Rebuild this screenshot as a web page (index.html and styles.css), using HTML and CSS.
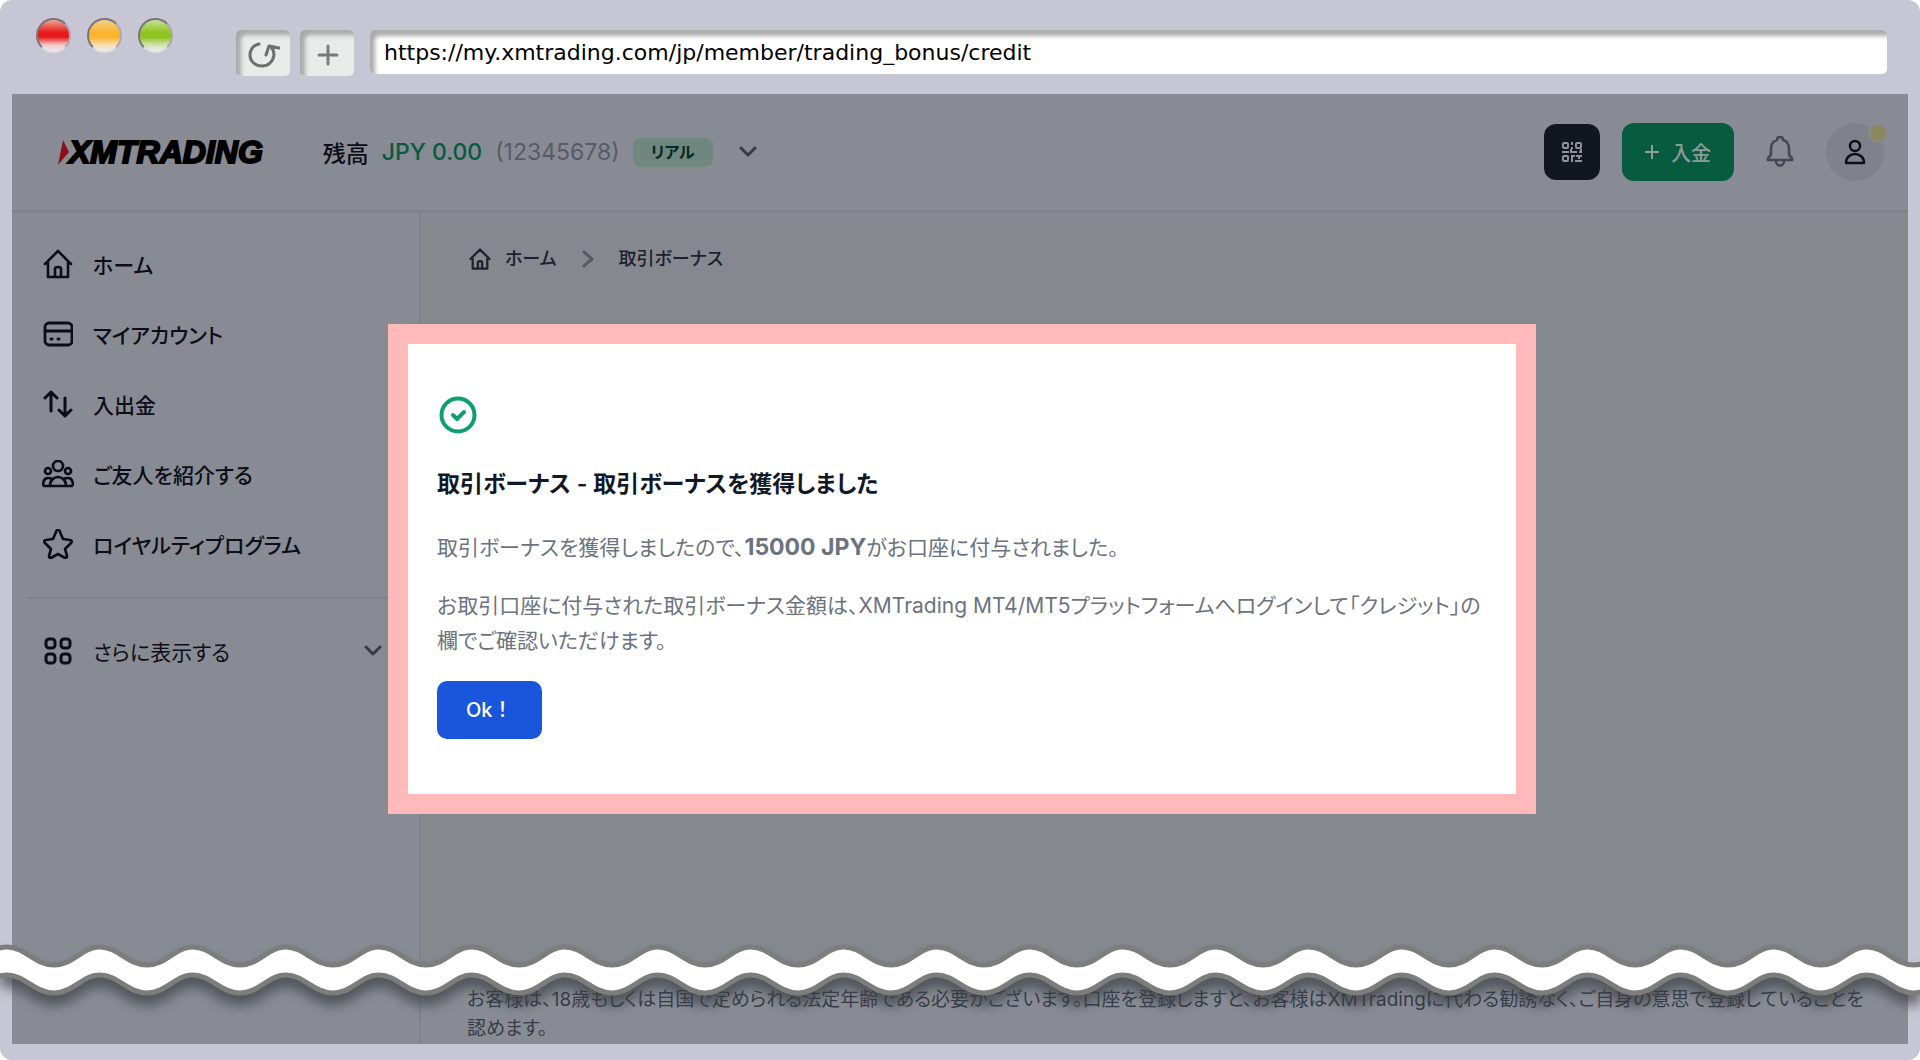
FILE: index.html
```html
<!DOCTYPE html>
<html lang="ja">
<head>
  <meta charset="UTF-8">
  <title>取引ボーナス</title>
  <link rel="stylesheet" href="styles.css">
</head>
<body>

<div class="browser">
  <div class="toolbar">
    <div class="lights">
      <span class="light red"></span>
      <span class="light yellow"></span>
      <span class="light green"></span>
    </div>
    <div class="tools">
      <button class="tool" aria-label="再読み込み">
        <svg width="32" height="28" viewBox="0 0 32 28" fill="none" stroke="#6f6f6f" stroke-width="3" stroke-linecap="round" stroke-linejoin="round"><path d="M11 3C5 4 2 9 2 14c0 6 5 11 12 11 6 0 11-4 12-11 0-3 0-5-3-8M18 14l3-9 10 2"/></svg>
      </button>
      <button class="tool" aria-label="新しいタブ">
        <svg width="22" height="22" viewBox="0 0 22 22" fill="none" stroke="#7a7a7a" stroke-width="3" stroke-linecap="round"><path d="M11 2v18M2 11h18"/></svg>
      </button>
    </div>
    <input class="url" type="text" aria-label="URL" value="https://my.xmtrading.com/jp/member/trading_bonus/credit">
  </div>

  <div class="page">
    <header class="header">
      <a href="#" class="logo">
        <svg width="11" height="25" viewBox="0 0 11 25"><path d="M5 0l6 12L0 25z" fill="#8c1019"/></svg>
        <span>XMTRADING</span>
      </a>
      <div class="balance">
        <span class="label">残高</span>
        <span class="amount">JPY 0.00</span>
        <span class="account">(12345678)</span>
        <span class="badge">リアル</span>
        <button class="plain" aria-label="口座を選択">
          <svg width="20" height="12" viewBox="0 0 20 12" fill="none" stroke="#373b47" stroke-width="3" stroke-linecap="round" stroke-linejoin="round"><path d="M3 2l7 7 7-7"/></svg>
        </button>
      </div>
      <div class="actions">
        <button class="qr" aria-label="QRコード">
          <svg width="22" height="22" viewBox="0 0 22 22" fill="none" stroke="#8f929a" stroke-width="2"><rect x="2" y="2" width="5" height="5" rx="1"/><rect x="15" y="2" width="5" height="5" rx="1"/><rect x="2" y="15" width="5" height="5" rx="1"/><path d="M11 1v3M11 6v2M1 11h7M10 8v3h6M18 11h3M20 8v2M11 21v-6h3M15 15h6M18 15v3M14 20h7"/></svg>
        </button>
        <button class="deposit">
          <svg width="14" height="14" viewBox="0 0 14 14" stroke="#8f9b98" stroke-width="2"><path d="M7 0v14M0 7h14"/></svg>
          入金
        </button>
        <button class="plain bell" aria-label="お知らせ">
          <svg width="28" height="32" viewBox="0 0 28 32" fill="none" stroke="#444854" stroke-width="2.6" stroke-linejoin="round"><path d="M2 24h24v-2c-2-1-3-2-3-5v-4c0-5-2-8-6-9 0-2-1-3-3-3s-3 1-3 3c-4 1-6 4-6 9v4c0 3-1 4-3 5zM10 25c0 6 8 6 8 0"/></svg>
        </button>
        <button class="user" aria-label="プロフィール">
          <svg width="22" height="26" viewBox="0 0 22 26" fill="none" stroke="#0b0e17" stroke-width="2.4" stroke-linejoin="round"><circle cx="11" cy="7" r="5"/><path d="M2 24c0-12 18-12 18 0z"/></svg>
          <span class="dot"></span>
        </button>
      </div>
    </header>

    <div class="layout">
      <nav class="sidebar">
        <a href="#" class="item">
          <svg width="30" height="30" viewBox="0 0 30 30" fill="none" stroke="currentColor" stroke-width="2.6" stroke-linecap="round" stroke-linejoin="round"><path d="M2 15L15 2l13 13M5 12v16h20V12M12 28v-8c0-1 1-2 3-2s3 1 3 2v8"/></svg>
          ホーム
        </a>
        <a href="#" class="item">
          <svg width="30" height="30" viewBox="0 0 30 30" fill="none" stroke="currentColor" stroke-width="2.8" stroke-linecap="round"><rect x="2" y="4" width="27" height="22" rx="4"/><path d="M2 12h27"/><path d="M8 20h1M15 20h1" stroke-width="3"/></svg>
          マイアカウント
        </a>
        <a href="#" class="item">
          <svg width="30" height="30" viewBox="0 0 30 30" fill="none" stroke="currentColor" stroke-width="3" stroke-linecap="round" stroke-linejoin="round"><path d="M2 9l6-6 6 6M8 3v19M22 9v18M16 21l6 6 6-6"/></svg>
          入出金
        </a>
        <a href="#" class="item">
          <svg class="wide" width="32" height="28" viewBox="0 0 32 28" fill="none" stroke="currentColor" stroke-width="2.7" stroke-linejoin="round"><circle cx="16" cy="6" r="5"/><circle cx="6" cy="11" r="3"/><circle cx="26" cy="11" r="3"/><path d="M8 26c0-12 16-12 16 0M1 26c0-6 2-8 5-8 2 0 3 0 4 1M31 26c0-6-2-8-5-8-2 0-3 0-4 1M1 26h30"/></svg>
          ご友人を紹介する
        </a>
        <a href="#" class="item">
          <svg width="30" height="30" viewBox="0 0 30 30" fill="none" stroke="currentColor" stroke-width="2.7" stroke-linejoin="round"><path d="M15 1c1 0 2 1 2 2l3 7 7 1c2 0 2 2 1 3l-6 6 2 7c0 2-1 2-2 2l-7-4-7 4c-1 0-2 0-2-2l2-7-6-6c-1-1-1-3 1-3l7-1 3-7c0-1 1-2 2-2z"/></svg>
          ロイヤルティプログラム
        </a>
        <button class="item more">
          <svg width="30" height="30" viewBox="0 0 30 30" fill="none" stroke="currentColor" stroke-width="3"><rect x="3" y="3" width="9" height="9" rx="3"/><rect x="18" y="3" width="9" height="9" rx="3"/><rect x="3" y="18" width="9" height="9" rx="3"/><rect x="18" y="18" width="9" height="9" rx="3"/></svg>
          さらに表示する
          <svg class="arrow" width="20" height="12" viewBox="0 0 20 12" fill="none" stroke="#373b47" stroke-width="3" stroke-linecap="round" stroke-linejoin="round"><path d="M3 2l7 7 7-7"/></svg>
        </button>
      </nav>

      <main class="main">
        <div class="breadcrumb">
          <a href="#">
            <svg width="22" height="22" viewBox="0 0 30 30" fill="none" stroke="currentColor" stroke-width="3" stroke-linecap="round" stroke-linejoin="round"><path d="M2 15L15 2l13 13M5 12v16h20V12M12 28v-8c0-1 1-2 3-2s3 1 3 2v8"/></svg>
            ホーム
          </a>
          <svg width="12" height="20" viewBox="0 0 12 20" fill="none" stroke="#565b67" stroke-width="3" stroke-linecap="round" stroke-linejoin="round"><path d="M2 3l8 7-8 7"/></svg>
          <span>取引ボーナス</span>
        </div>
        <p class="notice">お客様は、18歳もしくは自国で定められる法定年齢である必要がございます。口座を登録しますと、お客様はXMTradingに代わる勧誘なく、ご自身の意思で登録していることを認めます。</p>
      </main>
    </div>

    <div class="overlay">
      <div class="modal" role="dialog" aria-labelledby="modalTitle">
        <svg class="check" width="42" height="42" viewBox="0 0 42 42" fill="none" stroke="#0e9f6e" stroke-linecap="round" stroke-linejoin="round"><circle cx="21" cy="21" r="16.5" stroke-width="4"/><path d="M16 21l4 4 7-7" stroke-width="4"/></svg>
        <h1 id="modalTitle">取引ボーナス - 取引ボーナスを獲得しました</h1>
        <p>取引ボーナスを獲得しましたので、<strong>15000 JPY</strong>がお口座に付与されました。</p>
        <p>お取引口座に付与された取引ボーナス金額は、XMTrading MT4/MT5プラットフォームへログインして「クレジット」の欄でご確認いただけます。</p>
        <button class="ok">Ok！</button>
      </div>
    </div>
  </div>

  <!-- torn page line -->
  <svg class="wave" width="100%" height="76" aria-hidden="true">
    <defs>
      <pattern id="wavePattern" width="93" height="76" patternUnits="userSpaceOnUse">
        <path d="M-86 6C-68 6-58 24-39 24S-11 6 7 6 35 24 54 24 82 6 100 6 128 24 147 24V52C128 52 118 34 100 34S73 52 54 52 25 34 7 34-20 52-39 52-68 34-86 34Z" fill="#fff" stroke="#7d7d7d" stroke-width="5"/>
      </pattern>
    </defs>
    <rect width="100%" height="76" fill="url(#wavePattern)"/>
  </svg>
</div>

</body>
</html>
```
FILE: styles.css
```css
* {
  box-sizing: border-box;
}
body {
  margin: 0;
  background: #fff;
  font-family: Inter, "Noto Sans CJK JP", sans-serif;
  font-feature-settings: "palt";
  color: #0b0e17;
}
svg {
  flex-shrink: 0;
}
button, input {
  font: inherit;
  font-feature-settings: inherit;
  color: inherit;
}
button {
  border: none;
  padding: 0;
  cursor: pointer;
}
a {
  color: inherit;
  text-decoration: none;
}
.browser {
  position: relative;
  display: flex;
  flex-direction: column;
  min-height: 100vh;
  padding: 0 12px 16px;
  background: #c7c6d4;
  border-radius: 12px;
  overflow: hidden;
}

/* browser bar */
.toolbar {
  display: flex;
  align-items: flex-start;
  height: 94px;
  padding: 18px 21px 0 24px;
}
.lights {
  display: flex;
  gap: 16px;
  margin-right: 63px;
}
.light {
  width: 35px;
  height: 35px;
  border-radius: 50%;
  border: 2px solid #77767c;
  border-bottom-color: #dddce4;
  border-right-color: #a9a8b2;
}
.red {
  background: linear-gradient(#f2a593, #e71a1a 40%, #e71a1a 55%, #f3c5c8 80%, #eee);
}
.yellow {
  background: linear-gradient(#f3cd85, #fab52c 40%, #fab52c 55%, #f5dcaf 80%, #eee);
}
.green {
  background: linear-gradient(#c5e393, #8fc320 40%, #8fc320 55%, #cfe2ac 80%, #eee);
}
.tools {
  display: flex;
  gap: 10px;
  margin: 12px 16px 0 0;
}
.tool {
  display: flex;
  align-items: center;
  justify-content: center;
  width: 54px;
  height: 46px;
  padding: 4px 0 0 2px;
  border-radius: 5px;
  background: #e9eaea;
  box-shadow: inset 5px 5px 4px #a9a9a9;
}
.url {
  flex: 1;
  min-width: 0;
  height: 44px;
  margin-top: 12px;
  padding: 0 14px 0;
  border: none;
  border-radius: 5px;
  background: #fff;
  box-shadow: inset 5px 6px 4px #acacac;
  font-family: "DejaVu Sans", sans-serif;
  font-size: 22px;
  color: #000;
}

/* page */
.page {
  position: relative;
  flex: 1;
  display: flex;
  flex-direction: column;
  background: #888b94;
}
.header {
  display: flex;
  align-items: center;
  height: 118px;
  padding: 0 24px 0 46px;
  border-bottom: 2px solid #7f828b;
}
.logo {
  display: flex;
  align-items: center;
  font-family: "Liberation Sans", sans-serif;
  font-size: 32px;
  font-weight: bold;
  font-style: italic;
  line-height: 1;
  color: #000;
  -webkit-text-stroke: 2px #000;
}
.balance {
  display: flex;
  align-items: center;
  gap: 13px;
  margin-left: 60px;
  font-size: 23px;
}
.label {
  font-weight: 500;
}
.amount {
  font-weight: 500;
  color: #075b3f;
}
.account {
  color: #565b67;
}
.badge {
  padding: 0 18px;
  border-radius: 8px;
  background: #70877f;
  font-size: 16px;
  font-weight: 700;
  line-height: 29px;
  color: #04291f;
}
.plain {
  display: flex;
  padding: 12px;
  background: none;
}
.actions {
  display: flex;
  align-items: center;
  gap: 22px;
  margin-left: auto;
}
.qr, .user, .deposit {
  display: flex;
  align-items: center;
  justify-content: center;
}
.qr {
  width: 56px;
  height: 56px;
  border-radius: 12px;
  background: #111620;
}
.deposit {
  gap: 12px;
  height: 58px;
  padding: 0 23px;
  border-radius: 12px;
  background: #075b3f;
  font-size: 20px;
  font-weight: 500;
  color: #8f9b98;
}
.bell {
  padding: 0 10px;
}
.user {
  position: relative;
  width: 58px;
  height: 58px;
  border-radius: 50%;
  background: #7f828b;
}
.dot {
  position: absolute;
  top: 0;
  right: -4px;
  width: 20px;
  height: 20px;
  border: 2px solid #888b94;
  border-radius: 50%;
  background: #8b885d;
}

.layout {
  flex: 1;
  display: flex;
}
.sidebar {
  display: flex;
  flex-direction: column;
  width: 409px;
  padding: 17px 16px;
  border-right: 2px solid #7f828b;
}
.item {
  display: flex;
  align-items: center;
  gap: 20px;
  height: 70px;
  padding: 0 20px 0 15px;
  font-size: 21px;
  font-weight: 500;
}
.item .wide {
  margin: 0 -1px;
}
.more {
  margin-top: 18px;
  border-top: 2px solid #7f828b;
  height: 106px;
  background: none;
  font-weight: 400;
}
.arrow {
  margin-left: auto;
}
.main {
  flex: 1;
  display: flex;
  flex-direction: column;
  justify-content: space-between;
  background: linear-gradient(#85888f 750px, #888b94 750px);
}
.breadcrumb, .breadcrumb a {
  display: flex;
  align-items: center;
}
.breadcrumb {
  gap: 25px;
  padding: 33px 48px;
  font-size: 18px;
  font-weight: 500;
  line-height: 28px;
  color: #1c212d;
}
.breadcrumb a {
  gap: 14px;
}
.notice {
  margin: 0;
  padding: 0 30px 1px 46px;
  font-size: 19px;
  line-height: 29px;
  color: #373c48;
}

/* modal */
.overlay {
  position: absolute;
  inset: 0;
  display: flex;
  align-items: center;
  justify-content: center;
  padding-left: 4px;
}
.modal {
  width: 100%;
  max-width: 1148px;
  padding: 50px 29px 55px;
  border: 20px solid #ffb9b9;
  background: #fff;
  font-size: 21px;
  line-height: 35px;
  color: #6b7280;
}
.modal h1 {
  margin: 31px 0 28px;
  font-size: 23px;
  font-weight: 600;
  color: #111827;
}
.modal p {
  margin: 0 0 23px;
}
.modal strong {
  font-size: 23px;
  line-height: 1;
}
.check {
  display: block;
}
.ok {
  height: 58px;
  padding: 0 29px;
  border-radius: 10px;
  background: #1a56db;
  font-size: 20px;
  font-weight: 500;
  font-feature-settings: normal;
  color: #fff;
}

.wave {
  position: absolute;
  left: 0;
  bottom: 43px;
  filter: drop-shadow(0 10px 6px rgba(60, 62, 68, 0.7));
}
```
